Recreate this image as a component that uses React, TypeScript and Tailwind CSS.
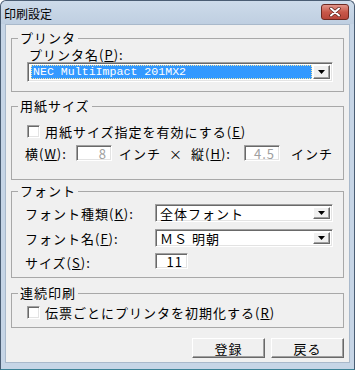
import type { ReactNode } from 'react';

const raised =
  'border border-t-[#fff] border-l-[#fff] border-r-[#696969] border-b-[#696969] shadow-[inset_-1px_-1px_0_#a0a0a0] bg-[#f0f0f0]';
const sunken =
  'border border-t-[#a0a0a0] border-l-[#a0a0a0] border-r-[#fff] border-b-[#fff] shadow-[inset_1px_1px_0_#696969,inset_-1px_-1px_0_#e3e3e3]';

function Group({ title, className, children }: { title: string; className?: string; children: ReactNode }) {
  return (
    <fieldset className={`border border-[#a8a8a8] ${className ?? ''}`}>
      <legend className="ml-[6px] px-[2px] text-[13px] leading-[14px] tracking-[1px]">{title}</legend>
      {children}
    </fieldset>
  );
}

function Arrow() {
  return (
    <svg width="7" height="4" viewBox="0 0 7 4">
      <path d="M0 0h7L3.5 4z" fill="#000" />
    </svg>
  );
}

function Combo({ value, selected, mono, className }: { value: string; selected?: boolean; mono?: boolean; className?: string }) {
  return (
    <div className={`${sunken} bg-white p-[2px] flex ${className ?? ''}`}>
      <div className="flex-1 flex items-center pl-[1px] pr-[1px]">
        <div
          className={`flex-1 h-full flex items-center ${
            selected ? 'bg-[#3399ff] text-white border border-dotted border-[#f2e6a8]' : ''
          } ${mono ? "font-['Liberation_Mono',monospace] text-[11.6px]" : 'text-[13px] tracking-[1px]'}`}
        >
          <span className="pl-[1px] leading-none">{value}</span>
        </div>
      </div>
      <div className={`${raised} w-[17px] flex items-center justify-center`}>
        <Arrow />
      </div>
    </div>
  );
}

function Check() {
  return <div className={`${sunken} bg-white w-[13px] h-[13px] shrink-0`} />;
}

function Field({ value, disabled, className }: { value: string; disabled?: boolean; className?: string }) {
  return (
    <div
      className={`${sunken} bg-white h-[16px] flex items-center justify-end pr-[4px] text-[13px] leading-none ${
        disabled ? 'text-[#a0a0a0]' : 'text-black'
      } ${className ?? ''}`}
    >
      {value}
    </div>
  );
}

function Button({ label }: { label: string }) {
  return (
    <div className={`${raised} w-[73px] h-[20px] flex items-center justify-center text-[13px] tracking-[1px] leading-none`}>
      {label}
    </div>
  );
}

export default function App() {
  return (
    <div className="w-[355px] h-[370px] bg-[#c6d5e6] border border-[#4a5d73] border-b-[#3d8397] rounded-t-[6px] flex flex-col text-black font-['Noto_Sans_CJK_JP','Liberation_Sans',sans-serif]">
      {/* タイトルバー */}
      <div className="h-[23px] flex items-start justify-between pl-[3px] pr-[5px] bg-gradient-to-b from-[#cddbea] to-[#bfcfe1] rounded-t-[6px]">
        <span className="text-[12px] leading-none mt-[7px]">印刷設定</span>
        <div className="mt-[3px] w-[28px] h-[16px] rounded-[3px] border border-[#6e2a22] bg-gradient-to-b from-[#e2968a] via-[#c8584a] to-[#b8463a] flex items-center justify-center">
          <svg width="12" height="10" viewBox="0 0 12 10">
            <path d="M2 1.5l8 7M10 1.5l-8 7" stroke="#5a2019" strokeWidth="3.4" strokeLinecap="round" />
            <path d="M2 1.5l8 7M10 1.5l-8 7" stroke="#fff" strokeWidth="2" strokeLinecap="round" />
          </svg>
        </div>
      </div>

      {/* 本体 */}
      <div className="mx-[4px] mb-[6px] flex-1 bg-[#f0f0f0] border border-[#a9b9cb] px-[5px] flex flex-col">
        <Group title="プリンタ" className="mt-[6px] pb-[9px]">
          <div className="pl-[17px] mt-[3px] text-[13px] leading-[14px] tracking-[1px]">
            プリンタ名(<u>P</u>):
          </div>
          <Combo value="NEC MultiImpact 201MX2" selected mono className="ml-[15px] w-[306px] h-[20px]" />
        </Group>

        <Group title="用紙サイズ" className="mt-[7px] pb-[18px]">
          <div className="pl-[15px] mt-[11px] h-[14px] flex items-center gap-[5px] text-[13px] tracking-[1px]">
            <Check />
            <span className="leading-none">用紙サイズ指定を有効にする(<u>E</u>)</span>
          </div>
          <div className="pl-[13px] mt-[7px] h-[16px] flex items-center text-[13px] tracking-[1px] leading-none">
            <span className="w-[51px]">横(<u>W</u>):</span>
            <Field value="8" disabled className="w-[36px]" />
            <span className="ml-[7px] w-[50px]">インチ</span>
            <span className="w-[22px]">×</span>
            <span className="w-[53px]">縦(<u>H</u>):</span>
            <Field value="4.5" disabled className="w-[36px]" />
            <span className="ml-[11px]">インチ</span>
          </div>
        </Group>

        <Group title="フォント" className="mt-[4px] pt-[5px] pb-[4px]">
          <div className="pl-[13px] flex flex-col gap-[5px] text-[13px] tracking-[1px]">
            <div className="h-[20px] flex items-center">
              <span className="w-[130px] leading-none">フォント種類(<u>K</u>):</span>
              <Combo value="全体フォント" className="w-[178px] h-[18px]" />
            </div>
            <div className="h-[20px] flex items-center">
              <span className="w-[130px] leading-none">フォント名(<u>F</u>):</span>
              <Combo value="ＭＳ 明朝" className="w-[178px] h-[18px]" />
            </div>
            <div className="h-[20px] flex items-start">
              <span className="w-[130px] leading-none mt-[3px]">サイズ(<u>S</u>):</span>
              <Field value="11" className="w-[33px]" />
            </div>
          </div>
        </Group>

        <Group title="連続印刷" className="mt-[8px] pt-[5px] pb-[8px]">
          <div className="pl-[15px] h-[14px] flex items-center gap-[5px] text-[13px] tracking-[1px]">
            <Check />
            <span className="leading-none">伝票ごとにプリンタを初期化する(<u>R</u>)</span>
          </div>
        </Group>

        <div className="mt-[10px] flex justify-end gap-[6px]">
          <Button label="登録" />
          <Button label="戻る" />
        </div>
      </div>
    </div>
  );
}
